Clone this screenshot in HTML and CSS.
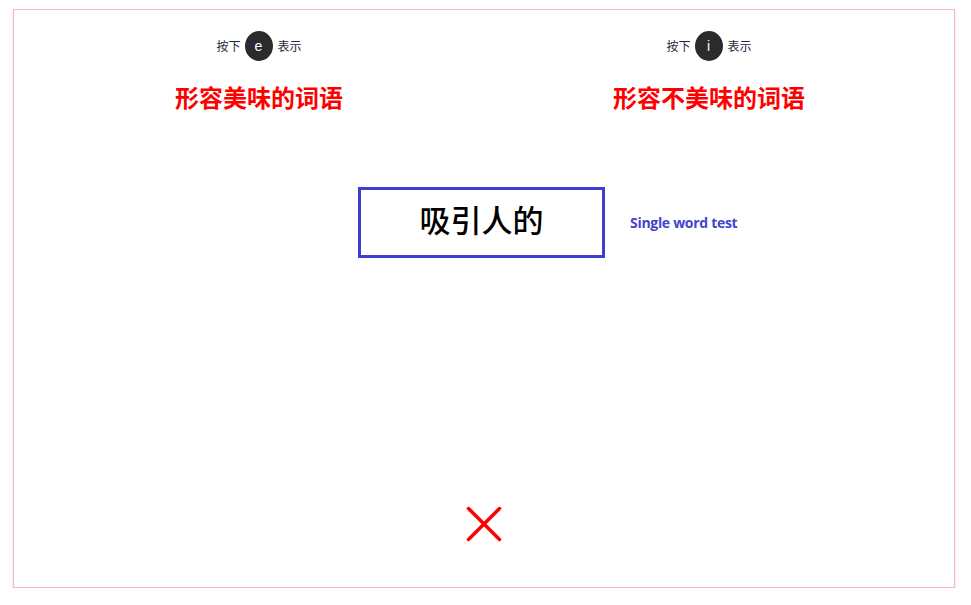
FILE: index.html
```html
<!DOCTYPE html>
<html lang="zh">
<head>
<meta charset="utf-8">
<link rel="stylesheet" href="styles.css">
</head>
<body>
<div class="card">
  <div class="cats">
    <div class="cat">
      <div class="keyrow"><span>按下</span><span class="key">e</span><span>表示</span></div>
      <div class="title">形容美味的词语</div>
    </div>
    <div class="cat">
      <div class="keyrow"><span>按下</span><span class="key">i</span><span>表示</span></div>
      <div class="title">形容不美味的词语</div>
    </div>
  </div>
  <div class="stimrow">
    <div></div>
    <div class="word">吸引人的</div>
    <div class="label">Single word test</div>
  </div>
  <div class="feedback">
    <svg width="36" height="36" viewBox="0 0 36 36"><path d="M2.5 2.5 L33.5 33.5 M33.5 2.5 L2.5 33.5" stroke="#ff0000" stroke-width="3.5" stroke-linecap="round" fill="none"/></svg>
  </div>
</div>
</body>
</html>
```

FILE: styles.css
```css
html, body { margin: 0; padding: 0; background: #fff; }
body { font-family: "Noto Sans CJK SC", "Noto Sans", sans-serif; }
.card {
  margin: 9px 0 0 13px;
  width: 940px;
  height: 577px;
  border: 1px solid #ffb6c1;
  box-shadow: 0 2px 4px rgba(0,0,0,0.12);
  display: flex;
  flex-direction: column;
  box-sizing: content-box;
}
.cats {
  display: grid;
  grid-template-columns: 1fr 1fr;
  padding: 21px 20px 0 20px;
}
.cat { display: flex; flex-direction: column; align-items: center; }
.keyrow {
  display: flex;
  align-items: center;
  font-size: 12px;
  color: #1f2937;
  height: 30px;
  line-height: 16px;
}
.key {
  width: 28px;
  height: 30px;
  border-radius: 50%;
  background: #2b2b2d;
  color: #fff;
  display: flex;
  align-items: center;
  justify-content: center;
  font-family: "Liberation Sans", sans-serif;
  font-size: 14px;
  margin: 0 5px 0 4px;
}
.title {
  margin-top: 20px;
  font-size: 24px;
  line-height: 32px;
  font-weight: 700;
  color: #ff0000;
}
.stimrow {
  display: grid;
  grid-template-columns: 1fr auto 1fr;
  align-items: center;
  margin-top: 74px;
  padding-right: 5px;
}
.word {
  width: 241px;
  height: 57px;
  padding-bottom: 8px;
  box-sizing: content-box;
  border: 3px solid #3f3fcf;
  display: flex;
  align-items: center;
  justify-content: center;
  font-size: 31px;
  line-height: 40px;
  font-weight: 500;
  color: #000;
}
.label {
  padding-left: 25px;
  font-family: "Open Sans", sans-serif;
  font-weight: 700;
  font-size: 14px;
  color: #4444cc;
  letter-spacing: -0.3px;
}
.feedback {
  margin-top: auto;
  padding-bottom: 45px;
  display: flex;
  justify-content: center;
}
```
